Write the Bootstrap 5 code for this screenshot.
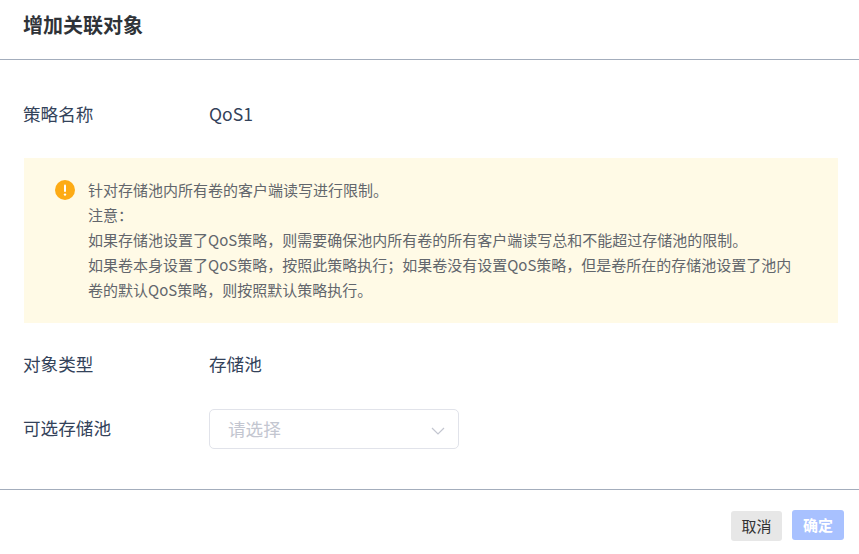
<!DOCTYPE html>
<html lang="zh-CN">
<head>
    <meta charset="UTF-8">
    <title>增加关联对象</title>
    <link href="https://cdn.jsdelivr.net/npm/bootstrap@5.3.0/dist/css/bootstrap.min.css" rel="stylesheet">
    <style>
        body {
            font-family: "Noto Sans CJK SC", sans-serif;
            background: #fff;
            height: 554px;
            overflow: hidden;
        }
        .dlg-head {
            height: 60px;
            padding: 11px 23px 0;
            border-bottom: 1px solid #a3adbc;
        }
        .dlg-title {
            font-size: 20px;
            line-height: 28px;
            font-weight: 700;
            color: #2f3338;
            margin: 0;
        }
        .dlg-body {
            height: 430px;
            padding: 40px 21px 0 24px;
            border-bottom: 1px solid #a3adbc;
        }
        .field-row {
            color: #33425a;
            font-size: 17.6px;
            line-height: 28px;
        }
        .field-label {
            width: 186px;
            flex-shrink: 0;
            margin-left: -1px;
        }
        .row-select .field-label {
            margin-bottom: 2px;
        }
        .notice-box {
            background: #fffae6;
            height: 165px;
            margin-top: 30px;
            margin-bottom: 27px;
            padding: 21px 31px;
        }
        .notice-text {
            font-size: 15px;
            line-height: 25px;
            color: #62666c;
            margin-left: 13px;
            margin-top: -2px;
            white-space: nowrap;
        }
        .notice-icon {
            flex-shrink: 0;
            margin-top: 1px;
        }
        .select-box {
            width: 250px;
            height: 40px;
            border: 1px solid #e1e3ea;
            border-radius: 5px;
            padding: 0 13px 0 18px;
            color: #c3c6d0;
            font-size: 17.6px;
        }
        .chevron-icon {
            margin-top: 4px;
        }
        .row-select {
            margin-top: 31px;
        }
        .dlg-foot {
            padding: 20px 15px 0 0;
        }
        .btn-cancel, .btn-ok {
            font-size: 15px;
            line-height: 20px;
            border-radius: 3px;
            border: 0;
            padding: 0;
        }
        .btn-cancel {
            width: 51px;
            height: 30px;
            margin-top: 1px;
            margin-right: 2px;
            background: #e7e7e7;
            color: #333;
        }
        .btn-ok {
            width: 52px;
            height: 30px;
            background: #a8c1ff;
            color: #fff;
            font-weight: 700;
        }
    </style>
</head>
<body>
    <div class="dlg-head">
        <h5 class="dlg-title">增加关联对象</h5>
    </div>
    <div class="dlg-body">
        <div class="field-row d-flex">
            <div class="field-label">策略名称</div>
            <div>QoS1</div>
        </div>
        <div class="notice-box d-flex">
            <svg class="notice-icon" width="20" height="20" viewBox="0 0 20 20">
                <circle cx="10" cy="10" r="10" fill="#fdab15"/>
                <rect x="9" y="4.5" width="2" height="7.5" rx="1" fill="#fff"/>
                <circle cx="10" cy="14.6" r="1.2" fill="#fff"/>
            </svg>
            <div class="notice-text">
                针对存储池内所有卷的客户端读写进行限制。<br>
                注意：<br>
                如果存储池设置了QoS策略，则需要确保池内所有卷的所有客户端读写总和不能超过存储池的限制。<br>
                如果卷本身设置了QoS策略，按照此策略执行；如果卷没有设置QoS策略，但是卷所在的存储池设置了池内<br>
                卷的默认QoS策略，则按照默认策略执行。
            </div>
        </div>
        <div class="field-row d-flex">
            <div class="field-label">对象类型</div>
            <div>存储池</div>
        </div>
        <div class="field-row row-select d-flex align-items-center">
            <div class="field-label">可选存储池</div>
            <div class="select-box d-flex align-items-center justify-content-between">
                <span>请选择</span>
                <svg class="chevron-icon" width="14" height="8" viewBox="0 0 14 8" fill="none">
                    <path d="M1 1l6 6 6-6" stroke="#c3c6d0" stroke-width="1.2"/>
                </svg>
            </div>
        </div>
    </div>
    <div class="dlg-foot d-flex justify-content-end align-items-start gap-2">
        <button class="btn-cancel">取消</button>
        <button class="btn-ok">确定</button>
    </div>
    <script src="https://cdn.jsdelivr.net/npm/bootstrap@5.3.0/dist/js/bootstrap.bundle.min.js"></script>
</body>
</html>
